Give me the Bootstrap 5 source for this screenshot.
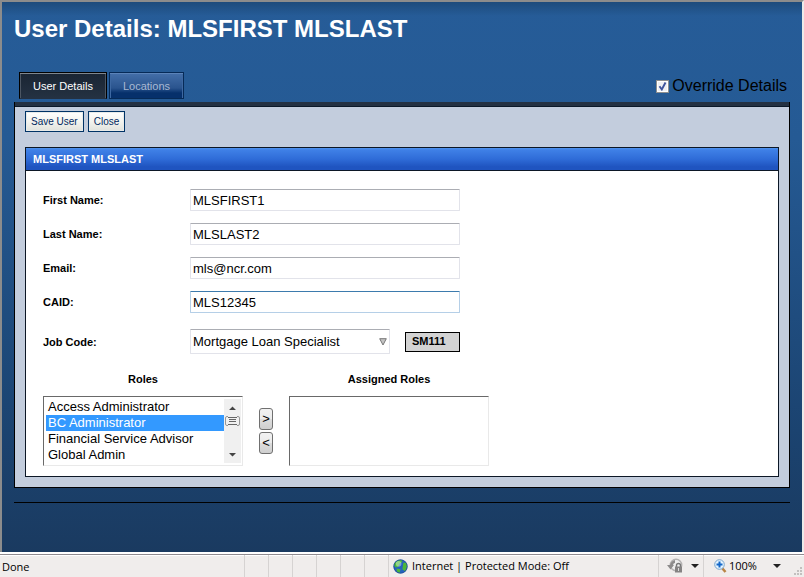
<!DOCTYPE html>
<html lang="en">
<head>
<meta charset="utf-8">
<meta name="viewport" content="width=device-width, initial-scale=1">
<title>User Details</title>
<link href="https://cdn.jsdelivr.net/npm/bootstrap@5.3.0/dist/css/bootstrap.min.css" rel="stylesheet">
<style>
body{font-family:"Liberation Sans",Arial,sans-serif;font-size:11px;line-height:16px;color:#000;background:#fff}
.stage{border-left:2px solid #8c8c8c;border-top:2px solid #8c8c8c;border-right:2px solid #eceae9;padding:0 12px;
background:linear-gradient(180deg,#1d4b7c 0,rgba(29,75,124,0) 14px),linear-gradient(180deg,#265c98 0,#255a94 25%,#1b4370 78%,#1a3a60 100%)}
.page-title{font-size:24px;line-height:28px;font-weight:bold;color:#fff;margin:0;padding-top:13px}
.tab-row{padding:29px 3px 0 5px;height:59px}
.tab-row .nav{gap:2px}
.tab-row .nav-link{font-size:11px;line-height:16px;border-radius:0;border:1px solid #062a57;padding:5px 13px 4px;color:#a9b9d2;background:linear-gradient(180deg,#446fa9 0,#2a548e 60%,#06306b 80%,#06306b 100%);box-shadow:inset 0 1px #5b83b9,inset 1px 0 #3d68a2,inset -1px 0 #3d68a2}
.tab-row .nav-link.active{color:#fff;border:1px solid #000;border-bottom-color:#243142;background:linear-gradient(180deg,#1a2533,#243142);box-shadow:inset 0 1px #7f868e,inset 1px 0 #4c5663,inset -1px 0 #4c5663}
.override{font-size:16px;line-height:20px;gap:3px}
.override .form-check-input{width:13px;height:13px;margin:0;border-radius:0;border:1px solid #8e8f8f;background-color:#eef0f4;box-shadow:inset 0 0 0 1px #fff}
.override .form-check-input:checked{background-image:url("data:image/svg+xml,%3csvg xmlns='http://www.w3.org/2000/svg' viewBox='0 0 11 11'%3e%3cpath d='M2.500 5.300 4.800 8.500 8.500 1.500' fill='none' stroke='%233e539c' stroke-width='1.900'/%3e%3c/svg%3e");background-size:11px 11px}
.sheet{border:1px solid #000;border-top:0;background:#c3cddd;padding:0 10px 10px}
.sheet-bar{height:5px;background:#243142;border-bottom:1px solid #0b1828;margin:0 -10px}
.tools{padding:4px 0 15px;gap:4px}
.tool{font-size:10px;line-height:15px;padding:2px 5px;border:1px solid #003366;border-radius:0;color:#00285e;background:linear-gradient(180deg,#fff,#f3f3ee 50%,#e0e2dd);box-shadow:inset 0 0 0 1px #e9ebe9}
.box{border:1px solid #0c1726;background:#fff}
.box-head{font-size:11px;line-height:16px;font-weight:bold;margin:0;color:#fff;padding:3px 7px;border-bottom:1px solid #0c1726;background:linear-gradient(180deg,#4f93f0 0,#3f80e6 2px,#2f6cd8 50%,#1f54c0 85%,#1f54c0 100%)}
.box-body{padding:18px 17px 10px}
.line{display:grid;grid-template-columns:147px minmax(0,270px) auto;align-items:center;margin-bottom:12px}
.line label,.list-title{font-weight:bold;font-size:11px;line-height:16px}
.line .form-control,.line .form-select{font-size:13px;line-height:18px;height:22px;padding:1px 2px;border:1px solid #e2e3ea;border-top-color:#abadb3;border-radius:1px;color:#000}
.line .form-control.current{border-color:#b5cfe7;border-top-color:#3d7bad}
.line .form-select{width:200px;height:25px;padding:0 20px 0 2px;background:#fff url("data:image/svg+xml,%3csvg xmlns='http://www.w3.org/2000/svg' viewBox='0 0 8 8'%3e%3cpath d='M.7.7h6.6L4 7z' fill='%23c4c4c4' stroke='%23777'/%3e%3c/svg%3e") no-repeat right 2px center/8px 8px}
.line.job{margin-bottom:17px}
.code{width:55px;height:20px;border:1px solid #000;background:#d3d3d3;font-weight:bold;line-height:17px;padding:0 6px;margin-left:15px}
.lists{gap:16px}
.list-col{width:200px}
.list-title{text-align:center;display:block;margin-bottom:9px}
.list-frame{height:70px;border:1px solid #e9e9e9;border-top-color:#696969;border-left-color:#696969;padding:2px 1px 2px 2px;background:#fff}
.list-frame select{border:0;outline:0;padding:0;margin:0;height:64px;min-width:0;border-radius:0;overflow:hidden;font-size:13px;background:#fff;color:#000;appearance:none}
.list-frame option{padding:0 2px;height:16px;min-height:16px;line-height:16px;font-size:13px}
.list-frame option.picked{background:#39f;color:#fff}
.move{gap:2px;padding-top:37px}
.mover{width:14px;height:22px;padding:0;border:1px solid #707070;border-radius:3px;background:linear-gradient(180deg,#f2f2f2 0,#ebebeb 50%,#ddd 50%,#cfcfcf);font-size:13px;line-height:18px;color:#000}
.rule{border-top:1px solid #000;margin-top:14px}
.status{border-top:1px solid #8f8a8f;box-shadow:inset 0 1px #fff;background:#f0edec;margin-top:2px;height:23px;font-family:"Open Sans","Noto Sans",sans-serif;font-size:11px;line-height:24px}
.status > div + div{border-left:1px solid #d6d3d2}
.done{padding-left:2px}
.cell{width:24px}
.net{gap:4px;width:270px;padding-left:4px}
.menu-btn{border:0;padding:0;background:none;font:inherit;line-height:22px;color:#000}
.lockcell{width:45px;padding-left:8px}
.lockcell .menu-btn{gap:7px}
.zoomcell{padding-left:10px;width:101px}
.zoomcell .menu-btn{gap:16px}
.pct{gap:2px}
</style>
<script src="https://cdn.jsdelivr.net/npm/bootstrap@5.3.0/dist/js/bootstrap.bundle.min.js"></script>
</head>
<body class="d-flex flex-column min-vh-100">
<main class="stage flex-fill">
  <h1 class="page-title">User Details: MLSFIRST MLSLAST</h1>
  <div class="tab-row d-flex justify-content-between">
    <nav class="nav align-items-start" aria-label="Sections">
      <a class="nav-link active" href="#details">User Details</a>
      <a class="nav-link" href="#locations">Locations</a>
    </nav>
    <div class="override d-flex align-items-center align-self-start pt-1">
      <input class="form-check-input" type="checkbox" id="override" checked>
      <label for="override">Override Details</label>
    </div>
  </div>
  <section class="sheet" id="details">
    <div class="sheet-bar"></div>
    <div class="tools d-flex">
      <button type="button" class="btn tool">Save User</button>
      <button type="button" class="btn tool">Close</button>
    </div>
    <form class="box">
      <h2 class="box-head">MLSFIRST MLSLAST</h2>
      <div class="box-body">
        <div class="line"><label for="first">First Name:</label><input class="form-control" id="first" value="MLSFIRST1"></div>
        <div class="line"><label for="last">Last Name:</label><input class="form-control" id="last" value="MLSLAST2"></div>
        <div class="line"><label for="email">Email:</label><input class="form-control" id="email" value="mls@ncr.com"></div>
        <div class="line mb-3"><label for="caid">CAID:</label><input class="form-control current" id="caid" value="MLS12345"></div>
        <div class="line job"><label for="job">Job Code:</label>
          <div class="d-flex align-items-center">
            <select class="form-select flex-shrink-0" id="job"><option>Mortgage Loan Specialist</option></select>
            <output class="code flex-shrink-0" for="job">SM111</output>
          </div>
        </div>
        <div class="lists d-flex">
          <div class="list-col">
            <label class="list-title" for="roles">Roles</label>
            <div class="list-frame d-flex">
              <select class="flex-fill" id="roles" multiple size="4">
                <option>Access Administrator</option>
                <option class="picked">BC Administrator</option>
                <option>Financial Service Advisor</option>
                <option>Global Admin</option>
              </select>
              <svg width="17" height="64" viewBox="0 0 17 64" aria-hidden="true">
                <rect width="17" height="64" fill="#f0f0f0"/>
                <path d="M5 11h7L8.500 7.500zM5 54h7l-3.500 3.500z" fill="#444"/>
                <path d="M4 17.500H3Q1.500 17.500 1.500 19v6q0 1.500 1.500 1.500h1M13 17.500h1q1.500 0 1.500 1.500v6q0 1.500-1.500 1.500h-1" fill="none" stroke="#979797"/>
                <path d="M4 18.500h9M5 20.500h7M5 22.500h7M4 25.500h9" stroke="#666"/>
              </svg>
            </div>
          </div>
          <div class="move d-flex flex-column">
            <button type="button" class="btn mover" aria-label="Assign role">&gt;</button>
            <button type="button" class="btn mover" aria-label="Remove role">&lt;</button>
          </div>
          <div class="list-col">
            <label class="list-title" for="assigned">Assigned Roles</label>
            <div class="list-frame d-flex"><select class="flex-fill" id="assigned" multiple size="4"></select></div>
          </div>
        </div>
      </div>
    </form>
  </section>
  <div class="rule"></div>
</main>
<footer class="status d-flex">
  <div class="done flex-fill">Done</div>
  <div class="cell"></div><div class="cell"></div><div class="cell"></div><div class="cell"></div><div class="cell"></div><div class="cell"></div>
  <div class="net d-flex align-items-center">
    <svg width="15" height="15" viewBox="0 0 16 16" aria-hidden="true"><circle cx="8" cy="8" r="7.500" fill="#2563bd"/><path d="M2 4Q5 .5 9 1l1 2-3 2-1 3-3 1-2-2zM11 4l3 0 1 4-2 5-3-2zM4 10l4 1-1 4-3-2z" fill="#4cb838"/><circle cx="6" cy="5" r="3" fill="#fff" opacity=".4"/><circle cx="8" cy="8" r="7.200" fill="none" stroke="#1d4687" stroke-width=".6"/></svg>
    <span>Internet | Protected Mode: Off</span>
  </div>
  <div class="lockcell d-flex align-items-center">
    <button type="button" class="menu-btn d-flex align-items-center" aria-label="Privacy report">
      <svg width="17" height="16" viewBox="0 0 17 16"><circle cx="9" cy="7" r="5.700" fill="#eee" stroke="#b5b3b3" stroke-width="1.500"/><path d="M0 7h7l-3.500 4.500zM3 7Q4 3 8 2v3Q6 5 6 8z" fill="#8d8b8b"/><path d="M9.500 9V7.500q0-2 2-2t2 2V9" fill="none" stroke="#777" stroke-width="1.400"/><rect x="8" y="8.500" width="7" height="6" fill="#858383"/><path d="M11.500 10v3" stroke="#ddd"/></svg>
      <svg width="8" height="4" viewBox="0 0 8 4"><path d="M0 0h8L4 4z" fill="#222"/></svg>
    </button>
  </div>
  <div class="zoomcell d-flex align-items-center justify-content-between">
    <button type="button" class="menu-btn d-flex align-items-center">
      <span class="pct d-flex align-items-center"><svg width="13" height="14" viewBox="0 0 13 14" aria-hidden="true"><path d="m8 9 3.500 4" stroke="#b98445" stroke-width="2.500"/><circle cx="5.500" cy="5.500" r="4.800" fill="#e4f4ff" stroke="#7aa5cb"/><path d="M5.500 2.500v6M2.500 5.500h6" stroke="#1467c8" stroke-width="2"/></svg>100%</span>
      <svg width="8" height="4" viewBox="0 0 8 4" aria-hidden="true"><path d="M0 0h8L4 4z" fill="#222"/></svg>
    </button>
    <svg class="align-self-end" width="10" height="10" viewBox="0 0 10 10" aria-hidden="true"><path d="M6 0h2v2H6zM3 3h2v2H3zM6 3h2v2H6zM0 6h2v2H0zM3 6h2v2H3zM6 6h2v2H6z" fill="#c3c0bf"/></svg>
  </div>
</footer>
</body>
</html>
